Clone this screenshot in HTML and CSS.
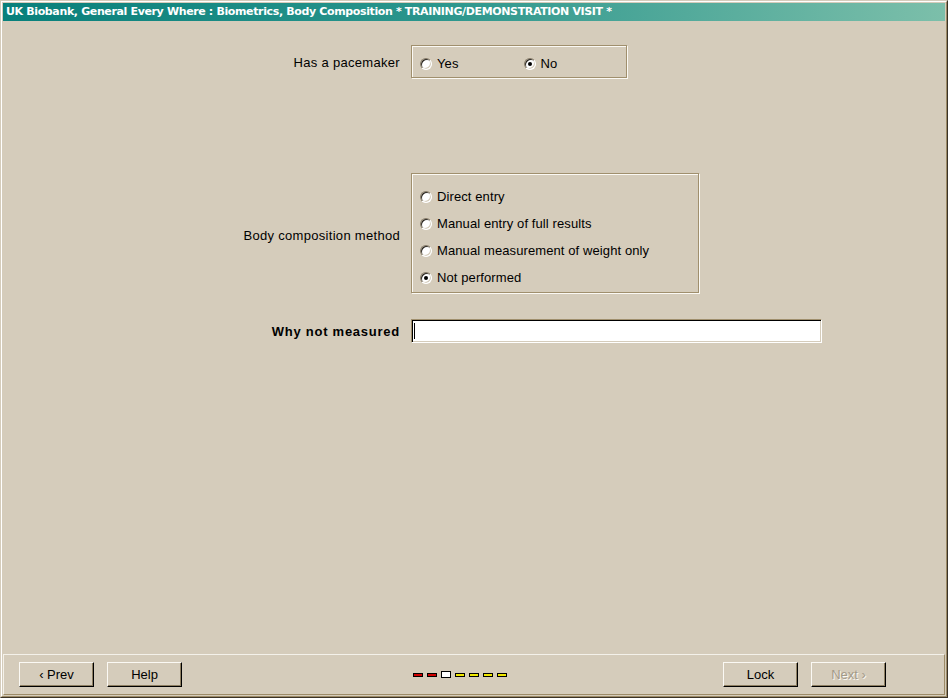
FILE: index.html
```html
<!DOCTYPE html>
<html>
<head>
<meta charset="utf-8">
<link rel="stylesheet" href="styles.css">
</head>
<body>
<div class="window">
  <div class="window-inner">
    <div class="titlebar">UK Biobank, General Every Where : Biometrics, Body Composition * TRAINING/DEMONSTRATION VISIT *</div>
    <div class="content">
      <div class="row row-pacemaker">
        <div class="label">Has a pacemaker</div>
        <div class="group group-pacemaker">
          <label class="radio-item"><span class="radio"></span><span class="rtext">Yes</span></label>
          <label class="radio-item item-no"><span class="radio checked"></span><span class="rtext">No</span></label>
        </div>
      </div>
      <div class="row row-method">
        <div class="label label-method">Body composition method</div>
        <div class="group group-method">
          <label class="radio-item"><span class="radio"></span><span class="rtext">Direct entry</span></label>
          <label class="radio-item"><span class="radio"></span><span class="rtext">Manual entry of full results</span></label>
          <label class="radio-item"><span class="radio"></span><span class="rtext">Manual measurement of weight only</span></label>
          <label class="radio-item"><span class="radio checked"></span><span class="rtext">Not performed</span></label>
        </div>
      </div>
      <div class="row row-why">
        <div class="label bold">Why not measured</div>
        <div class="textbox"><span class="caret"></span></div>
      </div>
    </div>
    <div class="footer">
      <div class="btn-group">
        <button class="btn">&lsaquo; Prev</button>
        <button class="btn">Help</button>
      </div>
      <div class="progress">
        <span class="dash red"></span>
        <span class="dash red"></span>
        <span class="current"></span>
        <span class="dash yellow"></span>
        <span class="dash yellow"></span>
        <span class="dash yellow"></span>
        <span class="dash yellow"></span>
      </div>
      <div class="btn-group">
        <button class="btn">Lock</button>
        <button class="btn disabled">Next &rsaquo;</button>
      </div>
    </div>
  </div>
</div>
</body>
</html>
```
FILE: styles.css
```css
* { box-sizing: border-box; }
html, body { margin: 0; padding: 0; }
body {
  width: 948px;
  height: 698px;
  background: #d5ccbb;
  font-family: "Liberation Sans", Arial, sans-serif;
  font-size: 13px;
  color: #000;
  overflow: hidden;
}
.window {
  width: 948px;
  height: 698px;
  border-top: 1px solid #d5ccbb;
  border-left: 1px solid #d5ccbb;
  border-right: 1px solid #3a3226;
  border-bottom: 1px solid #3a3226;
  background: #d5ccbb;
}
.window-inner {
  width: 100%;
  height: 100%;
  border-top: 1px solid #ffffff;
  border-left: 1px solid #ffffff;
  border-right: 1px solid #9c8a66;
  border-bottom: 1px solid #9c8a66;
  padding: 1px;
  display: flex;
  flex-direction: column;
}
.titlebar {
  height: 18px;
  background: linear-gradient(to right, #08807b 0%, #2a958c 45%, #7cbfaa 100%);
  color: #fff;
  font-family: "DejaVu Sans", Verdana, sans-serif;
  font-weight: bold;
  font-size: 11px;
  line-height: 18px;
  padding-left: 3px;
  white-space: nowrap;
  overflow: hidden;
  letter-spacing: -0.36px;
}
.content {
  flex: 1;
  display: flex;
  flex-direction: column;
}
.row {
  display: grid;
  grid-template-columns: 398px auto;
  column-gap: 10px;
  align-items: center;
}
.row-pacemaker { margin-top: 24px; }
.row-method { margin-top: 95px; }
.row-why { margin-top: 26px; }
.label {
  text-align: right;
  white-space: nowrap;
  letter-spacing: 0.3px;
  padding-top: 2px;
  padding-right: 1px;
}
.label-method { padding-top: 4px; }
.label.bold {
  font-weight: bold;
  letter-spacing: 0.75px;
  padding-top: 1px;
}
.group {
  border: 1px solid #a08f6d;
  box-shadow: inset 1px 1px 0 #fbf9f4, 1px 1px 0 #fbf9f4;
}
.group-pacemaker {
  width: 216px;
  height: 33px;
  display: flex;
  align-items: center;
  padding-left: 8px;
  padding-top: 4px;
}
.group-pacemaker .item-no { margin-left: 65px; }
.group-method {
  width: 288px;
  height: 120px;
  display: flex;
  flex-direction: column;
  padding: 15px 0 0 8px;
  row-gap: 11px;
}
.radio-item {
  display: flex;
  align-items: center;
  height: 16px;
  white-space: nowrap;
}
.radio {
  position: relative;
  width: 12px;
  height: 12px;
  border-radius: 50%;
  background: #fff;
  border: 1px solid;
  border-color: #857a66 #ffffff #ffffff #857a66;
  box-shadow: inset 1px 1px 0 #2a2620, inset -1px -1px 0 #d5ccbb;
  margin-right: 5px;
  flex: none;
}
.radio.checked::after {
  content: "";
  position: absolute;
  left: 3px;
  top: 3px;
  width: 4px;
  height: 4px;
  border-radius: 50%;
  background: #000;
}
.rtext { line-height: 16px; letter-spacing: 0.1px; }
.textbox {
  position: relative;
  width: 411px;
  height: 24px;
  background: #fff;
  border-top: 1px solid #a08f6d;
  border-left: 1px solid #a08f6d;
  border-right: 1px solid #ffffff;
  border-bottom: 1px solid #ffffff;
  box-shadow: inset 1px 1px 0 #000, inset -1px -1px 0 #d5ccbb;
}
.caret {
  position: absolute;
  left: 2px;
  top: 3px;
  width: 1px;
  height: 16px;
  background: #000;
}
.footer {
  height: 41px;
  border-top: 1px solid #f4f1ea;
  border-left: 1px solid #f4f1ea;
  border-right: 1px solid #9c8a66;
  border-bottom: 1px solid #9c8a66;
  display: flex;
  align-items: center;
  padding-left: 15px;
}
.btn-group {
  display: flex;
  column-gap: 13px;
}
.btn {
  width: 75px;
  height: 25px;
  background: #d5ccbb;
  font-family: "Liberation Sans", Arial, sans-serif;
  font-size: 13px;
  color: #000;
  border-top: 1px solid #fbf9f4;
  border-left: 1px solid #fbf9f4;
  border-right: 1px solid #000;
  border-bottom: 1px solid #000;
  box-shadow: inset -1px -1px 0 #8e7f62;
  padding: 0 0 1px 0;
  margin: 0;
}
.btn.disabled {
  color: #a39a88;
  text-shadow: 1px 1px 0 #fbf9f4;
}
.progress {
  display: flex;
  align-items: center;
  column-gap: 4px;
  margin-left: 231px;
  margin-right: 216px;
}
.dash {
  width: 10px;
  height: 4px;
  border: 1px solid #000;
}
.dash.red { background: #d00000; }
.dash.yellow { background: #f0e800; }
.current {
  width: 10px;
  height: 7px;
  border: 1px solid #000;
  background: #fff;
}
```
